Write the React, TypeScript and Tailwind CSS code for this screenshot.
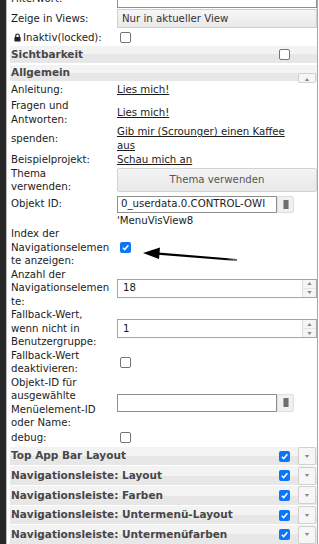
import {FC, ReactNode} from 'react';

const Check: FC<{on?: boolean}> = ({on}) =>
  on ? (
    <span className="flex h-[11px] w-[11px] items-center justify-center rounded-[2px] bg-[#0b76f7]">
      <svg viewBox="0 0 10 10" className="h-[9px] w-[9px]">
        <path d="M2 5.3 4.1 7.3 8.2 2.6" fill="none" stroke="#fff" strokeWidth="1.7" />
      </svg>
    </span>
  ) : (
    <span className="block h-[11px] w-[11px] rounded-[2px] border border-[#767676] bg-white" />
  );

const Spinner = () => (
  <span className="flex h-full w-[14px] flex-col border-l border-[#dcdcdc] bg-[#f5f5f5]">
    <span className="flex flex-1 items-center justify-center border-b border-[#e4e4e4]">
      <svg viewBox="0 0 6 4" className="h-[3px] w-[5px]"><path d="M0 4 3 0 6 4z" fill="#8a8a8a" /></svg>
    </span>
    <span className="flex flex-1 items-center justify-center">
      <svg viewBox="0 0 6 4" className="h-[3px] w-[5px]"><path d="M0 0 3 4 6 0z" fill="#8a8a8a" /></svg>
    </span>
  </span>
);

const PickBtn = () => (
  <span className="flex h-full w-[17px] items-center justify-center rounded-[2px] border border-[#dedede] bg-[#f1f1f1]">
    <span className="block h-[9px] w-[6px] border-x border-[#aaa] bg-[#6f6f6f]" />
  </span>
);

const DropBtn = () => (
  <span className="flex h-[18px] w-[18px] items-center justify-center rounded-[2px] border border-[#d0d0d0] bg-[#f6f6f6]">
    <svg viewBox="0 0 6 4" className="h-[3px] w-[6px]"><path d="M0 0 3 4 6 0z" fill="#8c8c8c" /></svg>
  </span>
);

const Row: FC<{h: string; label: ReactNode; children?: ReactNode}> = ({h, label, children}) => (
  <div className={`grid grid-cols-[107px_1fr] items-center ${h}`}>
    <div className="whitespace-nowrap pl-[1px]">{label}</div>
    <div className="flex items-center">{children}</div>
  </div>
);

const Band: FC<{title: string; right?: ReactNode; className?: string}> = ({title, right, className = ''}) => (
  <div
    className={`relative flex items-center justify-between bg-linear-to-b from-[#f3f3f3] from-50% to-[#e7e7e7] to-50% pl-[1px] pr-[1px] font-bold text-[#474747] ${className}`}
  >
    <span className="whitespace-nowrap">{title}</span>
    {right}
  </div>
);

const Link: FC<{children: ReactNode}> = ({children}) => <span className="underline underline-offset-[1px]">{children}</span>;

const NavBand: FC<{title: string}> = ({title}) => (
  <Band
    title={title}
    className="mt-px h-[19px] text-[10.5px]"
    right={
      <span className="flex items-center gap-[8px]">
        <Check on />
        <DropBtn />
      </span>
    }
  />
);

export default function App() {
  return (
    <div className="relative flex h-[544px] w-[319px] overflow-hidden bg-white font-['DejaVu_Sans',Verdana,sans-serif] text-[10.2px] leading-[13.5px] text-[#1c1c1c]">
      <div className="w-[6px] shrink-0 bg-[#272727]" />
      <div className="w-px shrink-0 bg-[#bdbdbd]" />
      <div className="w-[3px] shrink-0" />
      <div className="-mt-[12px] flex w-[308px] shrink-0 flex-col border-r border-[#a8a8a8]">
        <Row h="h-[21px]" label="Filterwort:">
          <span className="block h-[19px] w-full border border-[#8f8f8f] bg-white" />
        </Row>
        <Row h="h-[21px]" label="Zeige in Views:">
          <span className="flex h-[19px] w-full items-center border border-[#cfcfcf] bg-linear-to-b from-[#f6f6f6] to-[#e9e9e9] pl-[4px] text-[#333]">
            Nur in aktueller View
          </span>
        </Row>
        <Row
          h="h-[17px]"
          label={
            <span className="flex items-center gap-[2px] pl-[3px]">
              <svg viewBox="0 0 8 10" className="h-[9px] w-[7px]">
                <path d="M2 4.5V3a2 2 0 0 1 4 0v1.5" fill="none" stroke="#222" strokeWidth="1.3" />
                <rect x="0.5" y="4.3" width="7" height="5.4" rx="0.8" fill="#222" />
              </svg>
              Inaktiv(locked):
            </span>
          }
        >
          <span className="pl-[3px]"><Check /></span>
        </Row>
        <Band title="Sichtbarkeit" className="h-[17px] text-[10.5px]" right={<span className="pr-[26px]"><Check /></span>} />
        <Band
          title="Allgemein"
          className="mt-[2px] h-[17px] text-[10.5px]"
          right={
            <span className="absolute right-[1px] top-[8px] flex h-[10px] w-[18px] items-end justify-center rounded-[2px] border border-[#d0d0d0] bg-[#f6f6f6] pb-[1px]">
              <svg viewBox="0 0 6 4" className="h-[3px] w-[6px]"><path d="M0 4 3 0 6 4z" fill="#8c8c8c" /></svg>
            </span>
          }
        />
        <Row h="h-[18px]" label="Anleitung:"><Link>Lies mich!</Link></Row>
        <Row h="h-[26px]" label={<>Fragen und<br />Antworten:</>}><Link>Lies mich!</Link></Row>
        <Row h="h-[28px]" label="spenden:">
          <span className="whitespace-nowrap"><Link>Gib mir (Scrounger) einen Kaffee</Link><br /><Link>aus</Link></span>
        </Row>
        <Row h="h-[14px]" label="Beispielprojekt:"><Link>Schau mich an</Link></Row>
        <Row h="h-[28px]" label={<>Thema<br />verwenden:</>}>
          <span className="flex h-[24px] w-full items-center justify-center rounded-[2px] border border-[#d3d3d3] bg-linear-to-b from-[#f4f4f4] to-[#e8e8e8] text-[#555]">
            Thema verwenden
          </span>
        </Row>
        <Row h="h-[21px]" label="Objekt ID:">
          <span className="flex h-[17px] items-stretch">
            <span className="flex w-[160px] items-center overflow-hidden whitespace-nowrap border border-[#8f8f8f] pl-[3px]">
              0_userdata.0.CONTROL-OWI
            </span>
            <PickBtn />
          </span>
        </Row>
        <Row h="h-[13px]" label=""><span className="whitespace-nowrap">'MenuVisView8</span></Row>
        <Row h="h-[41px]" label={<>Index der<br />Navigationselemen<br />te anzeigen:</>}>
          <span className="pl-[3px]"><Check on /></span>
        </Row>
        <Row h="h-[41px]" label={<>Anzahl der<br />Navigationselemen<br />te:</>}>
          <span className="flex h-[19px] w-full items-center justify-between border border-[#a4a4a4]">
            <span className="pl-[5px]">18</span>
            <Spinner />
          </span>
        </Row>
        <Row h="h-[41px]" label={<>Fallback-Wert,<br />wenn nicht in<br />Benutzergruppe:</>}>
          <span className="flex h-[19px] w-full items-center justify-between border border-[#a4a4a4]">
            <span className="pl-[5px]">1</span>
            <Spinner />
          </span>
        </Row>
        <Row h="h-[27px]" label={<>Fallback-Wert<br />deaktivieren:</>}>
          <span className="pl-[3px]"><Check /></span>
        </Row>
        <Row h="h-[55px]" label={<>Objekt-ID für<br />ausgewählte<br />Menüelement-ID<br />oder Name:</>}>
          <span className="flex h-[18px] items-stretch">
            <span className="block w-[160px] border border-[#8f8f8f]" />
            <PickBtn />
          </span>
        </Row>
        <Row h="h-[16px]" label="debug:">
          <span className="pl-[3px]"><Check /></span>
        </Row>
        <NavBand title="Top App Bar Layout" />
        <NavBand title="Navigationsleiste: Layout" />
        <NavBand title="Navigationsleiste: Farben" />
        <NavBand title="Navigationsleiste: Untermenü-Layout" />
        <NavBand title="Navigationsleiste: Untermenüfarben" />
      </div>
      <svg className="pointer-events-none absolute left-[140px] top-[244px] h-[22px] w-[100px]" viewBox="0 0 100 22">
        <defs>
          <linearGradient id="ln" x1="0" x2="1" y1="0" y2="0">
            <stop offset="0" stopColor="#000" />
            <stop offset="0.85" stopColor="#000" />
            <stop offset="1" stopColor="#777" />
          </linearGradient>
        </defs>
        <path d="M18 9.6 97 16" stroke="url(#ln)" strokeWidth="2.2" fill="none" />
        <path d="M3 9 20 3.5 19 15z" fill="#000" />
      </svg>
    </div>
  );
}
